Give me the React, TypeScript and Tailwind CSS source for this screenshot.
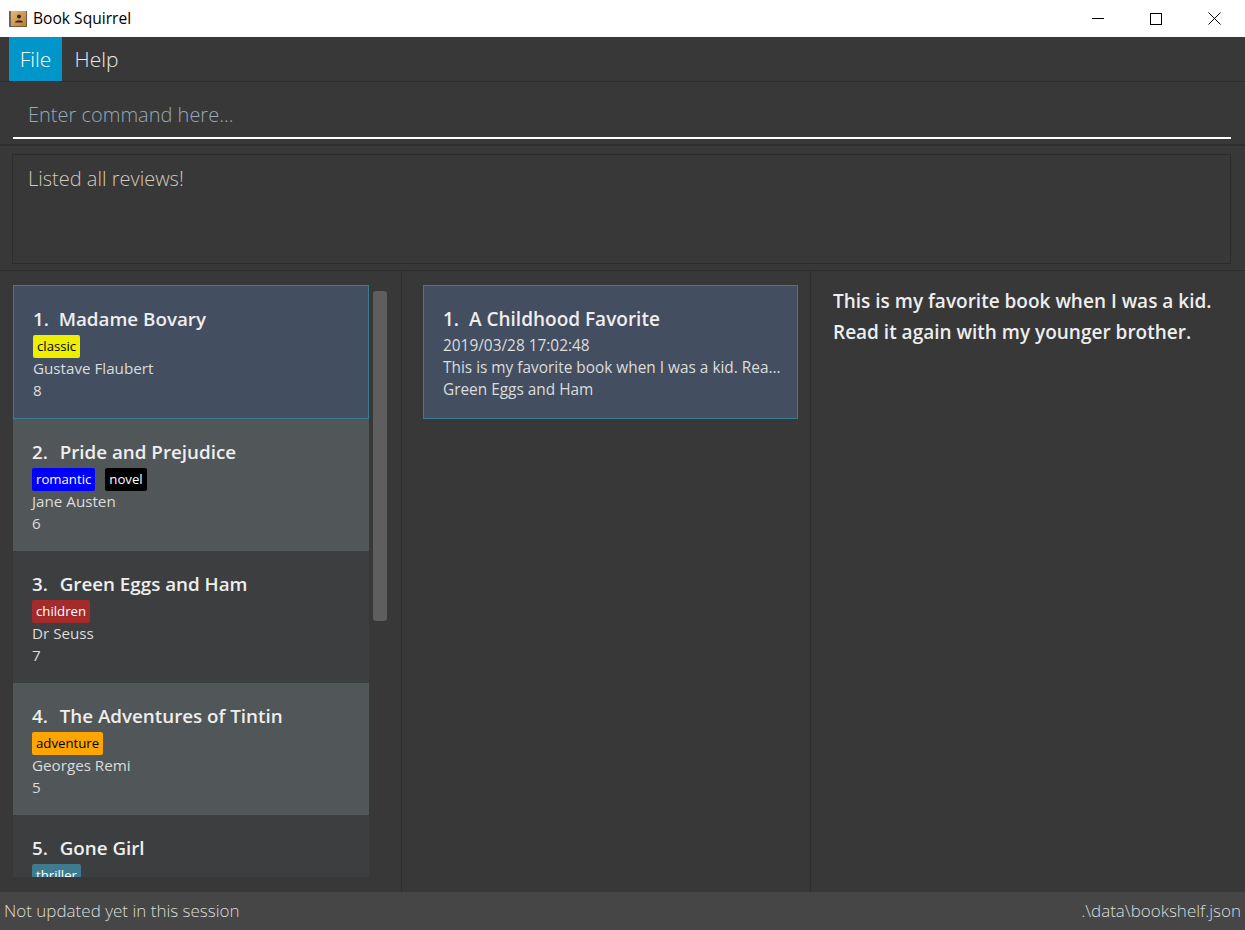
const books = [
  { n: 1, title: 'Madame Bovary', tags: [{ t: 'classic', c: 'bg-[#eeee00] text-black' }], author: 'Gustave Flaubert', rating: '8' },
  { n: 2, title: 'Pride and Prejudice', tags: [{ t: 'romantic', c: 'bg-[#0000ff] text-white' }, { t: 'novel', c: 'bg-black text-white' }], author: 'Jane Austen', rating: '6' },
  { n: 3, title: 'Green Eggs and Ham', tags: [{ t: 'children', c: 'bg-[#a52a2a] text-white' }], author: 'Dr Seuss', rating: '7' },
  { n: 4, title: 'The Adventures of Tintin', tags: [{ t: 'adventure', c: 'bg-[#ffa500] text-black' }], author: 'Georges Remi', rating: '5' },
  { n: 5, title: 'Gone Girl', tags: [{ t: 'thriller', c: 'bg-[#3e7b91] text-white' }], author: '', rating: '' },
];

const sans = "font-['Open_Sans','Noto_Sans',sans-serif]";

function AppIcon() {
  return (
    <svg width="18" height="18" viewBox="0 0 18 18">
      <defs>
        <linearGradient id="cover" x1="0" y1="0" x2="1" y2="1">
          <stop offset="0" stopColor="#e6b873" />
          <stop offset="1" stopColor="#b57f3e" />
        </linearGradient>
      </defs>
      <rect x="0" y="1" width="18" height="16" fill="#7a5a38" />
      <rect x="2" y="1" width="15" height="15" fill="url(#cover)" />
      <rect x="0" y="1" width="2" height="16" fill="#6b6258" />
      <circle cx="10" cy="6.500" r="2" fill="#3b2410" />
      <path d="M6 12.500c0-1.500 2-2 4-2s4 .5 4 2z" fill="#3b2410" />
    </svg>
  );
}

function BookCard({ book }: { book: (typeof books)[number] }) {
  const odd = book.n % 2 === 1;
  const selected = book.n === 1;
  return (
    <div
      className={`shrink-0 flex flex-col pt-[19px] pl-[19px] ${
        selected
          ? 'h-[134px] bg-[#434f60] border border-[#3a7c91]'
          : odd
            ? 'h-[132px] bg-[#3c3e3f]'
            : 'h-[132px] bg-[#515658]'
      }`}
    >
      <div className="h-[29px] text-[18.8px] leading-[29px] font-semibold text-[#eeeeee] whitespace-pre">
        <span className={selected ? '' : 'mr-[2px]'}>{book.n}.  </span>{book.title}
      </div>
      <div className="flex gap-[10px] mt-[1px] h-[22px]">
        {book.tags.map(tag => (
          <span key={tag.t} className={`${tag.c} flex items-center h-[23px] px-1 rounded-[2px] text-[13.2px] font-medium`}>
            {tag.t}
          </span>
        ))}
      </div>
      {book.author && <div className="text-[15.2px] leading-[22px] text-[#dcdcdc]">{book.author}</div>}
      {book.rating && <div className="text-[15.2px] leading-[22px] text-[#dcdcdc]">{book.rating}</div>}
    </div>
  );
}

export default function App() {
  return (
    <div className={`${sans} w-[1245px] h-[930px] flex flex-col overflow-hidden bg-[#383838]`}>
      <div className="h-[37px] shrink-0 bg-white flex items-center pl-[9px] text-[15.6px] text-black">
        <AppIcon />
        <span className="ml-[6px]">Book Squirrel</span>
        <div className="ml-auto flex items-center pr-[1px]">
          <div className="w-[58px] flex justify-center">
            <svg width="12" height="12" viewBox="0 0 12 12"><path d="M0 5.500H12" stroke="#000" /></svg>
          </div>
          <div className="w-[58px] flex justify-center">
            <svg width="12" height="12" viewBox="0 0 12 12"><rect x=".5" y=".5" width="11" height="11" fill="none" stroke="#000" /></svg>
          </div>
          <div className="w-[59px] flex justify-center">
            <svg width="13" height="13" viewBox="0 0 13 13"><path d="M.5.500l12 12M12.500.500l-12 12" stroke="#000" /></svg>
          </div>
        </div>
      </div>

      <div className="h-[45px] shrink-0 flex pl-[9px] text-[21px] font-light text-white border-b border-[#2e2e2e]">
        <div className="w-[53px] h-[44px] pt-[1px] bg-[#0096c9] flex items-center justify-center">File</div>
        <div className="w-[69px] h-[44px] pt-[1px] flex items-center justify-center text-[#e8e8e8]">Help</div>
      </div>

      <div className="h-[64px] shrink-0 pl-[13px] pr-[14px] border-b-2 border-[#2e2e2e]">
        <div className="h-[57px] border-b-2 border-white flex items-center pl-[15px] pt-[11px] text-[20px] font-light text-[#98a8b6]">
          Enter command here...
        </div>
      </div>

      <div className="h-[125px] shrink-0 pl-[12px] pt-[8px] pr-[14px] border-b border-[#2e2e2e]">
        <div className="h-[110px] border border-[#2c2c2c] pl-[15px] pt-[9px] text-[20px] font-light leading-[30px] text-[#d2cabe]">
          Listed all reviews!
        </div>
      </div>

      <div className="flex-1 min-h-0 flex">
        <div className="w-[402px] shrink-0 border-r border-[#2e2e2e] flex items-start pl-[13px] pt-[14px]">
          <div className="w-[356px] h-[592px] overflow-hidden flex flex-col">
            {books.map(b => <BookCard key={b.n} book={b} />)}
          </div>
          <div className="ml-[4px] mt-[6px] w-[14px] h-[330px] rounded-[3px] bg-[#5e5e5e]" />
        </div>

        <div className="w-[409px] shrink-0 border-r border-[#2e2e2e] pl-[21px] pt-[14px]">
          <div className="w-[375px] h-[134px] bg-[#434f60] border border-[#3a7c91] pt-[19px] pl-[19px] pr-[14px] flex flex-col">
            <div className="h-[29px] text-[19px] leading-[29px] font-semibold text-[#eeeeee] whitespace-pre">1.  A Childhood Favorite</div>
            <div className="mt-[1px] text-[15.4px] leading-[22px] text-[#dcdcdc]">2019/03/28 17:02:48</div>
            <div className="text-[15.4px] leading-[22px] text-[#dcdcdc] whitespace-nowrap">This is my favorite book when I was a kid. Rea...</div>
            <div className="text-[15.4px] leading-[22px] text-[#dcdcdc]">Green Eggs and Ham</div>
          </div>
        </div>

        <div className="flex-1 pl-[22px] pt-[15px] pr-[20px] text-[19px] leading-[31px] font-semibold text-[#eeeeee]">
          This is my favorite book when I was a kid. Read it again with my younger brother.
        </div>
      </div>

      <div className="h-[38px] shrink-0 bg-[#464646] flex items-center justify-between px-[4px] text-[17px] font-light text-[#dcdcdc]">
        <span>Not updated yet in this session</span>
        <span>.\data\bookshelf.json</span>
      </div>
    </div>
  );
}
